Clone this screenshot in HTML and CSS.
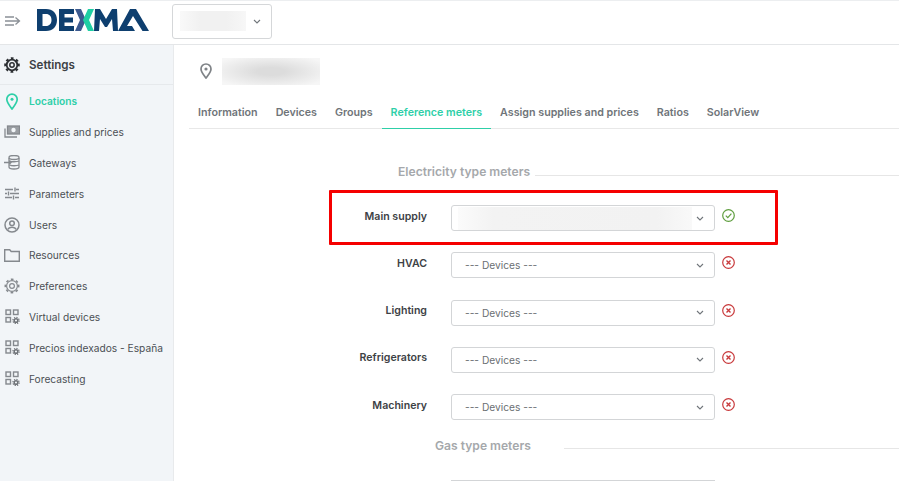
FILE: index.html
```html
<!DOCTYPE html>
<html lang="en">
<head>
    <meta charset="UTF-8">
    <title>Reference meters</title>
    <link rel="stylesheet" href="styles.css">
</head>
<body>
    <header class="topbar">
        <svg class="collapse-icon" width="16" height="12" viewBox="0 0 16 12" fill="none" stroke="#8b9096" stroke-width="1.300">
            <path d="M0 2h9M0 6h14M0 10h9M10.500 2.500L14.500 6L10.500 9.500"/>
        </svg>
        <svg class="logo" width="113" height="24" viewBox="0 0 113 24">
            <path fill="#0e3f6f" d="M0 1h9c7 0 11 4.500 11 11s-4 11-11 11H0zM5.500 6v12H9c3.500 0 5.500-2.500 5.500-6S12.500 6 9 6z"/>
            <path fill="#0e3f6f" d="M22 1h15v5H27.500v3.500H36v5h-8.500V18H37v5H22z"/>
            <path fill="#3c5a8f" d="M38 1h6l5 11-5 11h-6l5-11z"/>
            <path fill="#1fcfa3" d="M57 1h-6l-5 11 5 11h6l-5-11z"/>
            <path fill="#0e3f6f" d="M57 23l1-22h5l6 10 6-10h5l1 22h-5l-1-12-5 8h-2l-5-8-1 12z"/>
            <path fill="#0e3f6f" d="M81 23l12-22h6l13 22h-6.500L96 8l-6 10h5l3 5z"/>
        </svg>
        <div class="account-select">
            <span class="blur blur-account"></span>
            <svg class="chevron" width="8" height="5" viewBox="0 0 8 5" fill="none" stroke="#70757a" stroke-width="1.100"><path d="M1 1l3 3 3-3"/></svg>
        </div>
    </header>

    <div class="layout">
        <aside class="sidebar">
            <div class="sidebar-title">
                <svg class="nav-icon" width="16" height="16" viewBox="0 0 16 16" fill="none" stroke="#2c2f33">
                    <circle cx="8" cy="8" r="5.300" stroke-width="1.800"/>
                    <circle cx="8" cy="8" r="6.800" stroke-width="2" stroke-dasharray="2.670 2.670" transform="rotate(-11.250 8 8)"/>
                    <circle cx="8" cy="8" r="2.200" stroke-width="1.500"/>
                </svg>
                <span>Settings</span>
            </div>
            <nav class="nav">
                <a class="nav-item active">
                    <svg class="nav-icon" width="16" height="17" viewBox="0 0 16 17" fill="none" stroke="#2ecfa8" stroke-width="1.700">
                        <path d="M8 16C5 12 2.800 9.500 2.800 6.300a5.200 5.200 0 0 1 10.400 0C13.200 9.500 11 12 8 16z"/>
                        <circle cx="8" cy="6.300" r="1.500" fill="#2ecfa8" stroke="none"/>
                    </svg>
                    <span>Locations</span>
                </a>
                <a class="nav-item">
                    <svg class="nav-icon" width="16" height="14" viewBox="0 0 16 14" fill="none" stroke="#85898e" stroke-width="1.300">
                        <rect x="3.500" y="1" width="12" height="8" fill="#9a9ea3"/>
                        <circle cx="9.500" cy="5" r="2.200" fill="#f2f5f8" stroke="none"/>
                        <path d="M1 3.500V12h12"/>
                    </svg>
                    <span>Supplies and prices</span>
                </a>
                <a class="nav-item">
                    <svg class="nav-icon" width="16" height="15" viewBox="0 0 16 15" fill="none" stroke="#85898e" stroke-width="1.300">
                        <ellipse cx="10" cy="2.500" rx="5" ry="2"/>
                        <path d="M5 3v9c0 1 2 2 5 2s5-1 5-2V3M6 6c1 1 7 1 9 0M6 10c1 1 7 1 9 0M0 7.500h7M5 5.500l2 2-2 2"/>
                    </svg>
                    <span>Gateways</span>
                </a>
                <a class="nav-item">
                    <svg class="nav-icon" width="16" height="13" viewBox="0 0 16 13" fill="none" stroke="#85898e" stroke-width="1.400">
                        <path d="M1 2.500h8M12 2.500h3M11 .5v4M1 6.500h2M6 6.500h9M4.500 4.500v4M1 10.500h7M11 10.500h4M9.500 8.500v4"/>
                    </svg>
                    <span>Parameters</span>
                </a>
                <a class="nav-item">
                    <svg class="nav-icon" width="16" height="16" viewBox="0 0 16 16" fill="none" stroke="#85898e" stroke-width="1.500">
                        <circle cx="8" cy="8" r="7"/>
                        <circle cx="8" cy="6.200" r="2.300"/>
                        <path d="M3.800 12.500c1-2 2.500-2.300 4.200-2.300s3.200.3 4.200 2.300"/>
                    </svg>
                    <span>Users</span>
                </a>
                <a class="nav-item">
                    <svg class="nav-icon" width="16" height="13" viewBox="0 0 16 13" fill="none" stroke="#85898e" stroke-width="1.400">
                        <path d="M.7 12.300V.7h5l1.500 1.800h8.100v9.800z"/>
                    </svg>
                    <span>Resources</span>
                </a>
                <a class="nav-item">
                    <svg class="nav-icon" width="16" height="16" viewBox="0 0 16 16" fill="none" stroke="#85898e">
                        <circle cx="8" cy="8" r="5.400" stroke-width="1.200"/>
                        <circle cx="8" cy="8" r="6.700" stroke-width="1.600" stroke-dasharray="2.630 2.630" transform="rotate(-11.250 8 8)"/>
                        <circle cx="8" cy="8" r="2.400" stroke-width="1.200"/>
                    </svg>
                    <span>Preferences</span>
                </a>
                <a class="nav-item">
                    <svg class="nav-icon" width="16" height="15" viewBox="0 0 16 15" fill="none" stroke="#85898e" stroke-width="1.400">
                        <rect x="2" y="1" width="4.500" height="4.500"/><rect x="9.500" y="1" width="4.500" height="4.500"/><rect x="2" y="8.500" width="4.500" height="4.500"/>
                        <circle cx="12" cy="11.500" r="1.800" stroke-width="1.500" stroke="#6f7378"/>
                        <circle cx="12" cy="11.500" r="3.100" stroke-width="1.200" stroke="#6f7378" stroke-dasharray="1.220 1.220"/>
                    </svg>
                    <span>Virtual devices</span>
                </a>
                <a class="nav-item">
                    <svg class="nav-icon" width="16" height="15" viewBox="0 0 16 15" fill="none" stroke="#85898e" stroke-width="1.400">
                        <rect x="2" y="1" width="4.500" height="4.500"/><rect x="9.500" y="1" width="4.500" height="4.500"/><rect x="2" y="8.500" width="4.500" height="4.500"/>
                        <circle cx="12" cy="11.500" r="1.800" stroke-width="1.500" stroke="#6f7378"/>
                        <circle cx="12" cy="11.500" r="3.100" stroke-width="1.200" stroke="#6f7378" stroke-dasharray="1.220 1.220"/>
                    </svg>
                    <span>Precios indexados - España</span>
                </a>
                <a class="nav-item">
                    <svg class="nav-icon" width="16" height="15" viewBox="0 0 16 15" fill="none" stroke="#85898e" stroke-width="1.400">
                        <rect x="2" y="1" width="4.500" height="4.500"/><rect x="9.500" y="1" width="4.500" height="4.500"/><rect x="2" y="8.500" width="4.500" height="4.500"/>
                        <circle cx="12" cy="11.500" r="1.800" stroke-width="1.500" stroke="#6f7378"/>
                        <circle cx="12" cy="11.500" r="3.100" stroke-width="1.200" stroke="#6f7378" stroke-dasharray="1.220 1.220"/>
                    </svg>
                    <span>Forecasting</span>
                </a>
            </nav>
        </aside>

        <main class="content">
            <div class="location-head">
                <svg width="12" height="16" viewBox="0 0 12 16" fill="none" stroke="#7f8387" stroke-width="1.700">
                    <path d="M6 15C3.500 11.500 1 9 1 6a5 5 0 0 1 10 0c0 3-2.500 5.500-5 9z"/>
                    <circle cx="6" cy="6" r="1.600" fill="#7f8387" stroke="none"/>
                </svg>
                <span class="blur blur-name"></span>
            </div>

            <div class="tabs">
                <a class="tab">Information</a>
                <a class="tab">Devices</a>
                <a class="tab">Groups</a>
                <a class="tab active">Reference meters</a>
                <a class="tab">Assign supplies and prices</a>
                <a class="tab">Ratios</a>
                <a class="tab">SolarView</a>
            </div>

            <section class="meters">
                <div class="section-title electricity"><span>Electricity type meters</span></div>

                <div class="meter-row">
                    <label>Main supply</label>
                    <div class="select">
                        <span class="blur blur-supply"></span>
                        <svg class="chevron" width="8" height="5" viewBox="0 0 8 5" fill="none" stroke="#70757a" stroke-width="1.100"><path d="M1 1l3 3 3-3"/></svg>
                    </div>
                    <svg class="status" width="13" height="13" viewBox="0 0 13 13" fill="none" stroke="#5f9e3f" stroke-width="1.200">
                        <circle cx="6.500" cy="6.500" r="5.800"/><path d="M3.800 6.700l2 2 3.600-4"/>
                    </svg>
                </div>

                <div class="meter-row">
                    <label>HVAC</label>
                    <div class="select"><span>--- Devices ---</span>
                        <svg class="chevron" width="8" height="5" viewBox="0 0 8 5" fill="none" stroke="#70757a" stroke-width="1.100"><path d="M1 1l3 3 3-3"/></svg>
                    </div>
                    <svg class="status" width="13" height="13" viewBox="0 0 13 13" fill="none" stroke="#c8393b" stroke-width="1.200">
                        <circle cx="6.500" cy="6.500" r="5.800"/><path d="M4.500 4.500l4 4M8.500 4.500l-4 4" stroke-width="1.400"/>
                    </svg>
                </div>

                <div class="meter-row">
                    <label>Lighting</label>
                    <div class="select"><span>--- Devices ---</span>
                        <svg class="chevron" width="8" height="5" viewBox="0 0 8 5" fill="none" stroke="#70757a" stroke-width="1.100"><path d="M1 1l3 3 3-3"/></svg>
                    </div>
                    <svg class="status" width="13" height="13" viewBox="0 0 13 13" fill="none" stroke="#c8393b" stroke-width="1.200">
                        <circle cx="6.500" cy="6.500" r="5.800"/><path d="M4.500 4.500l4 4M8.500 4.500l-4 4" stroke-width="1.400"/>
                    </svg>
                </div>

                <div class="meter-row">
                    <label>Refrigerators</label>
                    <div class="select"><span>--- Devices ---</span>
                        <svg class="chevron" width="8" height="5" viewBox="0 0 8 5" fill="none" stroke="#70757a" stroke-width="1.100"><path d="M1 1l3 3 3-3"/></svg>
                    </div>
                    <svg class="status" width="13" height="13" viewBox="0 0 13 13" fill="none" stroke="#c8393b" stroke-width="1.200">
                        <circle cx="6.500" cy="6.500" r="5.800"/><path d="M4.500 4.500l4 4M8.500 4.500l-4 4" stroke-width="1.400"/>
                    </svg>
                </div>

                <div class="meter-row">
                    <label>Machinery</label>
                    <div class="select"><span>--- Devices ---</span>
                        <svg class="chevron" width="8" height="5" viewBox="0 0 8 5" fill="none" stroke="#70757a" stroke-width="1.100"><path d="M1 1l3 3 3-3"/></svg>
                    </div>
                    <svg class="status" width="13" height="13" viewBox="0 0 13 13" fill="none" stroke="#c8393b" stroke-width="1.200">
                        <circle cx="6.500" cy="6.500" r="5.800"/><path d="M4.500 4.500l4 4M8.500 4.500l-4 4" stroke-width="1.400"/>
                    </svg>
                </div>

                <div class="section-title gas"><span>Gas type meters</span></div>

                <div class="select-cut"></div>
            </section>
        </main>
    </div>

    <div class="highlight"></div>
</body>
</html>
```

FILE: styles.css
```css
body {
    margin: 0;
    font-family: Inter, "Liberation Sans", sans-serif;
    font-size: 11px;
    color: #3d4145;
    background-color: white;
}

.topbar {
    display: flex;
    align-items: center;
    height: 45px;
    box-sizing: border-box;
    border-top: 1px solid #eceef0;
    border-bottom: 1px solid #e4e6e8;
    padding-left: 5px;
}

.collapse-icon {
    margin-right: 16px;
    margin-top: -3px;
}

.logo {
    margin-right: 22px;
    margin-top: -5px;
}

.account-select {
    display: flex;
    align-items: center;
    box-sizing: border-box;
    width: 100px;
    height: 35px;
    border: 1px solid #d5d7d9;
    border-radius: 3px;
    padding-left: 7px;
    margin-top: -3px;
}

.account-select .chevron {
    margin-left: 7px;
}

.blur {
    display: block;
    background-color: #f1f1f1;
}

.blur-account {
    width: 66px;
    height: 20px;
    background: linear-gradient(90deg, #f9f9f9, #f1f1f1 30%, #f1f1f1 70%, #f7f7f7);
}

.layout {
    display: flex;
    height: 436px;
}

.sidebar {
    width: 173px;
    flex-shrink: 0;
    background-color: #f2f5f8;
    border-right: 1px solid #e8eaec;
}

.sidebar-title {
    display: flex;
    align-items: center;
    height: 39px;
    padding-left: 4px;
    border-bottom: 1px solid #e6e9ec;
    font-size: 11.600px;
    font-weight: 600;
}

.nav-icon {
    flex-shrink: 0;
    margin-right: 9px;
}

.nav {
    display: flex;
    flex-direction: column;
    padding-top: 1px;
}

.nav-item {
    display: flex;
    align-items: center;
    height: 30.800px;
    padding-left: 4px;
    color: #4b4f54;
    font-size: 10.200px;
    white-space: nowrap;
}

.nav-item.active {
    color: #2ecfa8;
    font-weight: 600;
}

.content {
    flex: 1;
    min-width: 0;
    padding-left: 15px;
}

.location-head {
    display: flex;
    align-items: center;
    gap: 10px;
    height: 52px;
    padding-left: 11px;
}

.blur-name {
    width: 98px;
    height: 27px;
    background: radial-gradient(ellipse at center, #dcdcdc 20%, #f6f6f6 90%);
}

.tabs {
    display: flex;
    height: 31px;
    border-bottom: 1px solid #e8e8e8;
}

.tab {
    display: flex;
    align-items: center;
    padding: 0 9px;
    font-size: 10.700px;
    font-weight: 600;
    color: #6f7479;
    white-space: nowrap;
}

.tab.active {
    color: #2ecfa8;
    border-bottom: 1px solid #2ecfa8;
    margin-bottom: -1px;
}

.section-title {
    position: relative;
    font-size: 12.100px;
    font-weight: 600;
    color: #a5a8ab;
    line-height: 16px;
}

.section-title::after {
    content: "";
    position: absolute;
    right: 0;
    border-top: 1px solid #e6e6e6;
}

.section-title.electricity {
    margin-top: 35px;
    padding-left: 209px;
    margin-bottom: 24.500px;
}

.section-title.electricity::after {
    left: 346px;
    top: 11px;
}

.section-title.gas {
    margin-top: -3px;
    padding-left: 246px;
    margin-bottom: 26px;
}

.section-title.gas::after {
    left: 375px;
    top: 10px;
}

.meter-row {
    display: flex;
    align-items: center;
    height: 27px;
    margin-bottom: 20.300px;
}

.meter-row label {
    width: 238px;
    margin-right: 24px;
    margin-top: -4px;
    text-align: right;
    font-size: 10.600px;
    font-weight: 600;
    color: #3d4145;
    flex-shrink: 0;
}

.select {
    display: flex;
    align-items: center;
    justify-content: space-between;
    width: 264px;
    height: 26px;
    box-sizing: border-box;
    border: 1px solid #d3d5d7;
    border-radius: 3px;
    padding: 0 10px 0 13px;
    font-size: 10.200px;
    color: #6a6e72;
    flex-shrink: 0;
}

/* only the top edge of the next select is still on screen */
.select-cut {
    width: 264px;
    margin-left: 262px;
    border-top: 1px solid #d3d5d7;
}

.blur-supply {
    width: 234px;
    height: 23px;
    margin-left: -7px;
    background: linear-gradient(90deg, #fbfbfb, #f3f3f3 15%, #f2f2f2 85%, #f9f9f9);
}

.status {
    margin-left: 7px;
    margin-top: -5px;
}

.highlight {
    position: absolute;
    left: 329px;
    top: 190px;
    width: 443px;
    height: 49px;
    border: 3px solid #f50000;
    border-radius: 1px;
}
```
